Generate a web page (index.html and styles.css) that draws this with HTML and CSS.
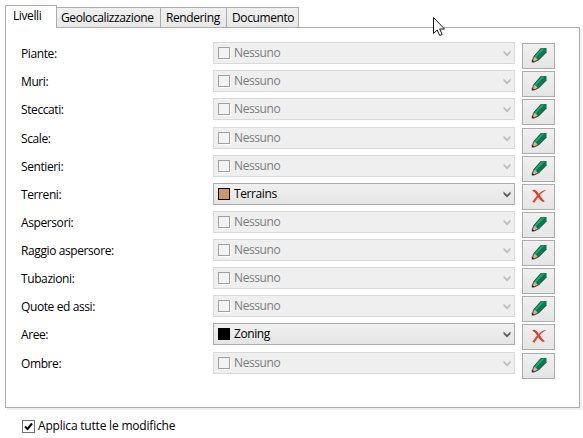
FILE: index.html
```
<!DOCTYPE html>
<html lang="it">
<head>
<meta charset="utf-8">
<title>Livelli</title>
<link rel="stylesheet" href="styles.css">
</head>
<body>
<svg class="defs" aria-hidden="true">
  <symbol id="pencil" viewBox="0 0 16 16">
    <path d="M10 1H15.500V5L7 13.500 2 15.500 1 14.500 2.500 9.500Z" fill="#087a4d"/>
    <path d="M10.500 1.500H13.500L5 10.500 3.500 9.500Z" fill="#1fa672"/>
    <path d="M15.500 5L7 13.500" stroke="#12402c" fill="none"/>
    <path d="M10 1.300L2.800 9.500" stroke="#12543a" stroke-width=".7" fill="none"/>
    <path d="M2.500 10L5 10.500 6.500 13 2.500 15 1.200 14.300Z" fill="#ddb18f"/>
    <path d="M.8 15.500V12.500L3.500 15Z" fill="#222"/>
    <path d="M2.500 10L1.500 14M3 15L6.500 13.500" stroke="#3b3b28" stroke-width=".8"/>
  </symbol>
  <symbol id="cross" viewBox="0 0 16 16">
    <path d="M1 2.500C3 1 5 1.800 6.700 4.200 8.800 7.200 10.500 10.500 14 13.200L12 14C9 12.500 7 9 5 6 4 4.300 2.700 3.300 1 2.500Z" fill="#dc3c22"/>
    <path d="M15.500 2C12 3.500 9 6.500 7 9.500 5.500 11.300 4.500 13 3.500 14.800L1.300 13.800C3.500 10.500 6 7.200 9 4.700 11.500 2.700 13 1.800 15.500 2Z" fill="#e5452c"/>
  </symbol>
  <symbol id="chev" viewBox="0 0 8 7">
    <path d="M.5 .5L4 3.700 7.500 .5V3L4 6.500 .5 3Z" fill="currentColor"/>
  </symbol>
</svg>
<div class="tabs">
  <div class="tab active">Livelli</div>
  <div class="tab geo">Geolocalizzazione</div>
  <div class="tab ren">Rendering</div>
  <div class="tab doc">Documento</div>
</div>
<div class="panel">
  <div class="row"><label>Piante:</label><div class="combo off"><i></i><span>Nessuno</span><svg><use href="#chev"/></svg></div><button><svg><use href="#pencil"/></svg></button></div>
  <div class="row"><label>Muri:</label><div class="combo off"><i></i><span>Nessuno</span><svg><use href="#chev"/></svg></div><button><svg><use href="#pencil"/></svg></button></div>
  <div class="row tall"><label>Steccati:</label><div class="combo off"><i></i><span>Nessuno</span><svg><use href="#chev"/></svg></div><button><svg><use href="#pencil"/></svg></button></div>
  <div class="row"><label>Scale:</label><div class="combo off"><i></i><span>Nessuno</span><svg><use href="#chev"/></svg></div><button><svg><use href="#pencil"/></svg></button></div>
  <div class="row"><label>Sentieri:</label><div class="combo off"><i></i><span>Nessuno</span><svg><use href="#chev"/></svg></div><button><svg><use href="#pencil"/></svg></button></div>
  <div class="row"><label>Terreni:</label><div class="combo"><i class="terrain"></i><span>Terrains</span><svg><use href="#chev"/></svg></div><button><svg><use href="#cross"/></svg></button></div>
  <div class="row"><label>Aspersori:</label><div class="combo off"><i></i><span>Nessuno</span><svg><use href="#chev"/></svg></div><button><svg><use href="#pencil"/></svg></button></div>
  <div class="row"><label>Raggio aspersore:</label><div class="combo off"><i></i><span>Nessuno</span><svg><use href="#chev"/></svg></div><button><svg><use href="#pencil"/></svg></button></div>
  <div class="row"><label>Tubazioni:</label><div class="combo off"><i></i><span>Nessuno</span><svg><use href="#chev"/></svg></div><button><svg><use href="#pencil"/></svg></button></div>
  <div class="row"><label>Quote ed assi:</label><div class="combo off"><i></i><span>Nessuno</span><svg><use href="#chev"/></svg></div><button><svg><use href="#pencil"/></svg></button></div>
  <div class="row tall"><label>Aree:</label><div class="combo"><i class="zoning"></i><span>Zoning</span><svg><use href="#chev"/></svg></div><button><svg><use href="#cross"/></svg></button></div>
  <div class="row"><label>Ombre:</label><div class="combo off"><i></i><span>Nessuno</span><svg><use href="#chev"/></svg></div><button><svg><use href="#pencil"/></svg></button></div>
</div>
<div class="apply">
  <svg class="check" viewBox="0 0 13 13"><rect x=".5" y=".5" width="12" height="12" fill="#fff" stroke="#707070"/><path d="M3 6.500L5.500 9 10 3.500" fill="none" stroke="#000" stroke-width="2"/></svg>
  <span>Applica tutte le modifiche</span>
</div>
<svg class="cursor" viewBox="0 0 12 19"><path d="M.5 .5V16.500L4.200 13 6.700 18.500 9.200 17.500 6.700 12H11.500Z" fill="#fff" stroke="#14142a"/></svg>
</body>
</html>
```
FILE: styles.css
```
* { box-sizing: border-box; }
body {
  margin: 0;
  padding: 5px 0 0 5px;
  width: 583px;
  height: 438px;
  overflow: hidden;
  background: #fff;
  color: #000;
  font: 12px/16px "Open Sans", "Noto Sans", sans-serif;
  letter-spacing: -0.4px;
}
.defs { position: absolute; width: 0; height: 0; }
.tabs { display: flex; align-items: flex-end; height: 23px; position: relative; }
.tab {
  height: 21px;
  padding: 2px 0 0 4px;
  border: 1px solid #acacac;
  border-left-width: 0;
  background: linear-gradient(#f0f0f0, #e8e8e8);
  white-space: nowrap;
}
.tab.active {
  width: 52px;
  height: 23px;
  padding-left: 7px;
  border-left-width: 1px;
  border-bottom: 0;
  background: #fff;
}
.geo { width: 104px; }
.ren { width: 66px; padding-left: 5px; }
.doc { width: 72px; padding-left: 5px; }
.panel {
  width: 575px;
  height: 381px;
  margin-top: -1px;
  padding: 14px 0 0 15px;
  border: 1px solid #acacac;
  box-shadow: 2px 2px 0 #f0f0f0;
}
.row { display: flex; align-items: flex-start; height: 28px; }
.row.tall { height: 29px; }
label { width: 192px; padding-top: 4px; }
.combo {
  display: flex;
  align-items: center;
  width: 302px;
  height: 22px;
  padding: 0 3px 0 4px;
  border: 1px solid #acacac;
  background: linear-gradient(#f0f0f0, #e5e5e5);
}
.combo.off { border-color: #d9d9d9; background: #efefef; color: #7c7c7c; }
.combo i { width: 12px; height: 12px; border: 1px solid #000; }
.combo.off i { border-color: #a0a0a0; background: #f3f3f3; box-shadow: 1px 1px 0 #fff; }
.combo .terrain { background: #cc9966; }
.combo .zoning { background: #000; }
.combo span { flex: 1; margin-left: 4px; }
.combo svg { width: 8px; height: 7px; margin-top: 1px; color: #606060; }
.combo.off svg { color: #bfbfbf; }
button {
  width: 33px;
  height: 26px;
  margin: 1px 0 0 7px;
  padding: 3px 0 5px 8px;
  border: 1px solid #acacac;
  background: linear-gradient(#f0f0f0, #e5e5e5);
}
button svg { display: block; width: 16px; height: 16px; }
.apply { display: flex; align-items: center; gap: 3px; margin: 10px 0 0 17px; letter-spacing: -0.2px; }
.check { width: 13px; height: 13px; }
.cursor { position: absolute; left: 433px; top: 17px; width: 12px; height: 19px; }
```
